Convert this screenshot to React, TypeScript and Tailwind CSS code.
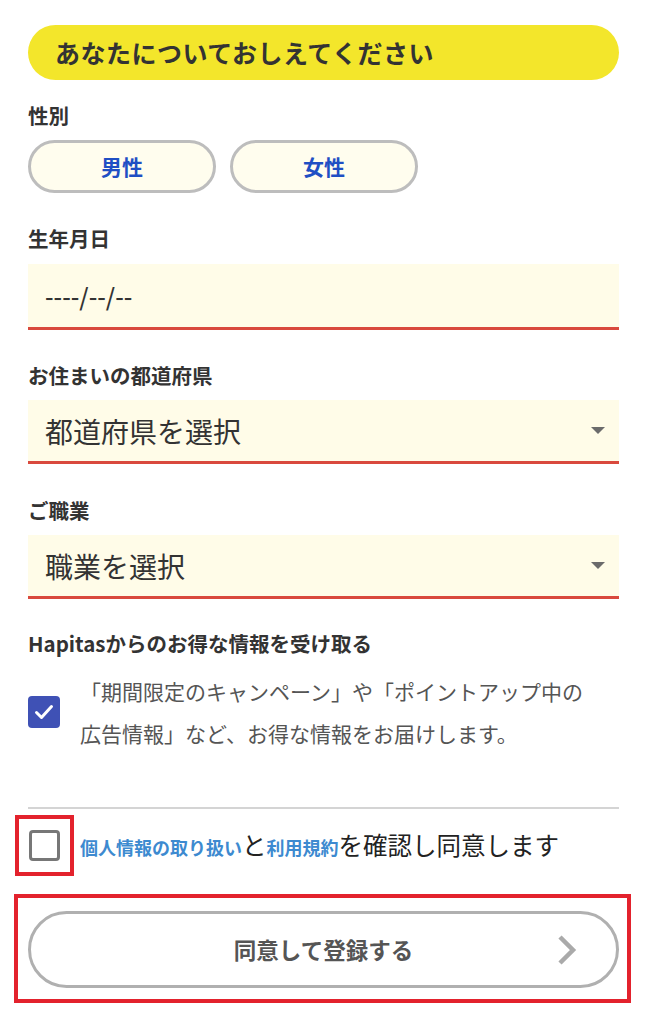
import { useState } from "react";

const font = "font-['Noto_Sans_CJK_JP','Noto_Sans',sans-serif]";

function Label({ children }: { children: React.ReactNode }) {
  return <div className="text-[20.5px] font-bold leading-[28px] text-[#333]">{children}</div>;
}

function SelectBox({ placeholder }: { placeholder: string }) {
  return (
    <div className="flex h-[64px] items-center justify-between border-b-[3px] border-[#d9493d] bg-[#fffce8] pl-[17px] pr-[13px]">
      <span className="text-[28px] leading-none text-[#333]">{placeholder}</span>
      <svg width="16" height="9" viewBox="0 0 16 9">
        <path d="M1 1h14L8 8z" fill="#6b6b6b" />
      </svg>
    </div>
  );
}

export default function App() {
  const [gender, setGender] = useState<"m" | "f" | null>(null);
  const [mail, setMail] = useState(true);
  const [agree, setAgree] = useState(false);

  return (
    <div className={`min-h-[1024px] bg-white px-[28px] pt-[25px] ${font}`}>
      <div className="flex h-[55px] items-center rounded-full bg-[#f3e62b] pl-[27px]">
        <h2 className="text-[25px] font-bold leading-none tracking-[0.5px] text-[#333]">
          あなたについておしえてください
        </h2>
      </div>

      <div className="mt-[21px]">
        <Label>性別</Label>
      </div>
      <div className="mt-[11px] flex gap-[14px]">
        {[
          { id: "m" as const, label: "男性" },
          { id: "f" as const, label: "女性" },
        ].map((g) => (
          <button
            key={g.id}
            onClick={() => setGender(g.id)}
            className={`flex h-[53px] w-[188px] items-center justify-center rounded-full border-[3px] border-[#bdbdbd] text-[21px] font-bold text-[#1f4fc4] ${
              gender === g.id ? "bg-[#fff3a8]" : "bg-[#fffdee]"
            }`}
          >
            {g.label}
          </button>
        ))}
      </div>

      <div className="mt-[31px]">
        <Label>生年月日</Label>
      </div>
      <div className="mt-[12px] flex h-[66px] items-center border-b-[3px] border-[#d9493d] bg-[#fffce8] pl-[17px]">
        <span className="text-[24px] font-medium leading-none text-[#333]">----/--/--</span>
      </div>

      <div className="mt-[31px]">
        <Label>お住まいの都道府県</Label>
      </div>
      <div className="mt-[11px]">
        <SelectBox placeholder="都道府県を選択" />
      </div>

      <div className="mt-[32px]">
        <Label>ご職業</Label>
      </div>
      <div className="mt-[11px]">
        <SelectBox placeholder="職業を選択" />
      </div>

      <div className="mt-[30px]">
        <Label>Hapitasからのお得な情報を受け取る</Label>
      </div>
      <div className="mt-[13px] flex items-center">
        <button
          onClick={() => setMail(!mail)}
          className={`flex h-[32px] w-[32px] shrink-0 items-center justify-center rounded-[4px] ${
            mail ? "bg-[#3f51b5]" : "border-[3px] border-[#777] bg-white"
          }`}
        >
          {mail && (
            <svg width="24" height="24" viewBox="0 0 24 24" fill="none" stroke="white" strokeWidth="3" strokeLinecap="round" strokeLinejoin="round">
              <path d="M4.5 12.5l5 5L19.5 6.5" />
            </svg>
          )}
        </button>
        <p className="ml-[20px] text-[21px] leading-[42px] text-[#555]">
          「期間限定のキャンペーン」や「ポイントアップ中の
          <br />
          広告情報」など、お得な情報をお届けします。
        </p>
      </div>

      <div className="mt-[53px] h-[2px] bg-[#d4d4d4]" />

      <div className="ml-[-13px] mt-[6px] flex items-center">
        <div className="border-4 border-[#e3222d] px-[10px] py-[11px]">
          <button
            onClick={() => setAgree(!agree)}
            className="block h-[31px] w-[31px] rounded-[4px] border-[3px] border-[#777] bg-white"
          />
        </div>
        <p className="ml-[6px] whitespace-nowrap leading-none text-[#222]">
          <a className="text-[18px] font-bold text-[#3d8ad0]">個人情報の取り扱い</a>
          <span className="text-[24.5px]">と</span>
          <a className="text-[18px] font-bold text-[#3d8ad0]">利用規約</a>
          <span className="text-[24.5px]">を確認し同意します</span>
        </p>
      </div>

      <div className="ml-[-14px] mr-[-12px] mt-[18px] border-4 border-[#e3222d] pb-[11px] pl-[10px] pr-[8px] pt-[13px]">
        <button className="relative flex h-[77px] w-full items-center justify-center rounded-full border-[3px] border-[#b0b0b0] bg-white">
          <span className="text-[22.5px] font-bold text-[#555]">同意して登録する</span>
          <svg className="absolute right-[38px] top-1/2 -translate-y-1/2" width="22" height="32" viewBox="0 0 22 32" fill="none" stroke="#aaa" strokeWidth="4.5">
            <path d="M4 3l13 13L4 29" />
          </svg>
        </button>
      </div>
    </div>
  );
}
